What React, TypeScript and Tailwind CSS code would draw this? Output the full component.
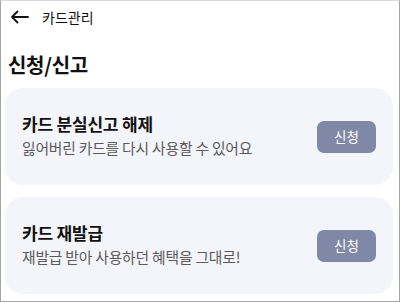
import React from "react";

const Card = ({ title, desc }: { title: string; desc: string }) => (
  <div className="flex items-center justify-between rounded-[18px] bg-[#f4f5fa] pl-[17px] pr-[17px] h-[97px]">
    <div className="flex flex-col pb-[2px]">
      <div className="text-[17px] font-bold leading-[22px] text-[#111111] tracking-[-0.2px]">{title}</div>
      <div className="mt-[3px] text-[14.8px] leading-[20px] text-[#5a5a5a] tracking-[-0.2px]">{desc}</div>
    </div>
    <button className="w-[59px] h-[32px] rounded-[7px] bg-[#7f88a6] text-white text-[13.5px] leading-none">
      신청
    </button>
  </div>
);

export default function App() {
  return (
    <div
      className="w-[400px] h-[302px] bg-white border border-[#a3a3a3] border-t-[#dcdcdc] overflow-hidden flex flex-col"
      style={{ fontFamily: '"Noto Sans CJK KR", "Noto Sans", sans-serif' }}
    >
      <div className="flex items-center h-[32px] pl-[9px]">
        <svg width="19" height="14" viewBox="0 0 19 14" fill="none" stroke="#111" strokeWidth="1.8" strokeLinecap="round" strokeLinejoin="round">
          <path d="M18 7H2M7.5 1.5L2 7l5.5 5.5" />
        </svg>
        <span className="ml-[13px] text-[14px] text-[#111]">카드관리</span>
      </div>
      <div className="pl-[7px] mt-[18px] text-[20px] font-bold leading-[28px] text-[#111] tracking-[-0.3px]">신청/신고</div>
      <div className="flex flex-col gap-[12px] mt-[9px] ml-[4px] mr-[6px]">
        <Card title="카드 분실신고 해제" desc="잃어버린 카드를 다시 사용할 수 있어요" />
        <Card title="카드 재발급" desc="재발급 받아 사용하던 혜택을 그대로!" />
      </div>
    </div>
  );
}
